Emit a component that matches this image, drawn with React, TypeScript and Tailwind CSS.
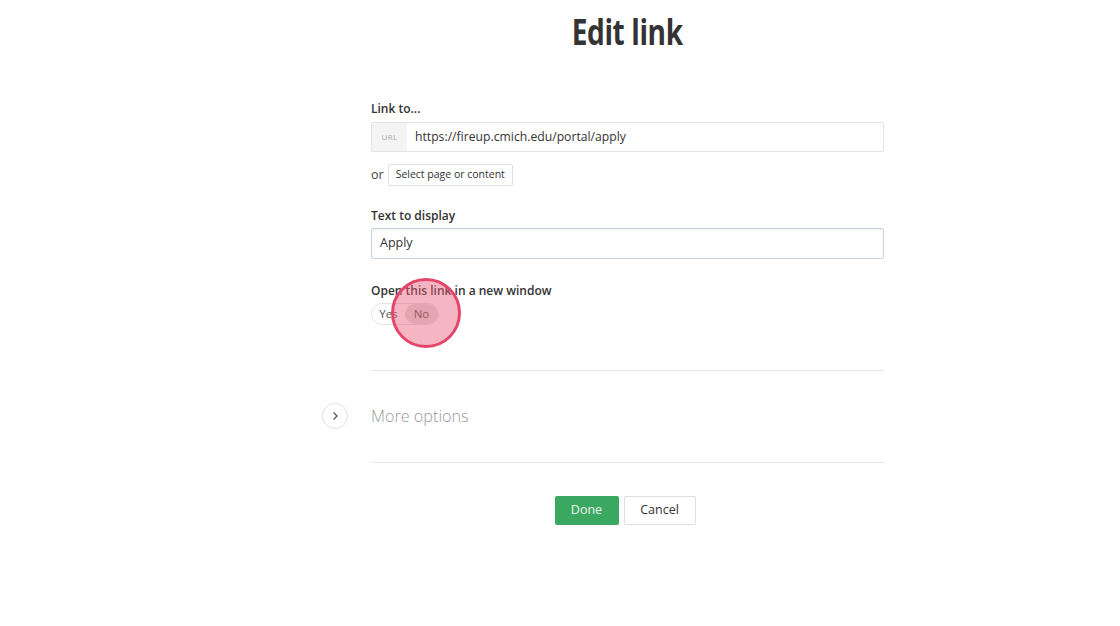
import React from "react";

export default function App() {
  return (
    <div className="w-[1120px] h-[626px] bg-white overflow-hidden relative" style={{ fontFamily: '"Open Sans", "Liberation Sans", sans-serif' }}>
      <div className="pl-[371px] w-[884px] box-content">
        <div className="w-[513px]">
          <h1 className="text-center text-[36px] leading-[44px] font-bold text-[#333] pt-[10px] tracking-[-0.5px]">
            <span className="inline-block scale-x-[0.78]">Edit link</span>
          </h1>

          <div className="mt-[46px]">
            <div className="text-[12px] leading-[18px] font-semibold text-[#333]">Link to...</div>
            <div className="mt-[4px] flex h-[30px] border border-[#e3e3e3] rounded-[2px]">
              <div className="w-[35px] bg-[#f4f4f4] flex items-center justify-center text-[8px] text-[#aaa] tracking-[0.3px]">URL</div>
              <div className="flex items-center pl-[8px] text-[12.2px] text-[#333]">https://fireup.cmich.edu/portal/apply</div>
            </div>
            <div className="mt-[12px] flex items-center gap-[4px]">
              <span className="text-[12.5px] text-[#444]">or</span>
              <button className="h-[22px] px-[7px] border border-[#e0e0e0] rounded-[2px] text-[10.5px] text-[#333] bg-white">Select page or content</button>
            </div>
          </div>

          <div className="mt-[21px]">
            <div className="text-[12px] leading-[18px] font-semibold text-[#333]">Text to display</div>
            <div className="mt-[3px] h-[31px] border border-[#c9d4e0] rounded-[2px] flex items-center pl-[8px] text-[12.5px] text-[#333] shadow-[inset_0_1px_2px_rgba(0,0,0,0.06)]">Apply</div>
          </div>

          <div className="mt-[23px]">
            <div className="text-[12px] leading-[18px] font-semibold text-[#333]">Open this link in a new window</div>
            <div className="mt-[3px] inline-flex h-[22px] border border-[#e3e3e3] rounded-full overflow-hidden text-[11.5px] text-[#555]">
              <div className="w-[33px] flex items-center justify-center">Yes</div>
              <div className="w-[33px] flex items-center justify-center bg-[#e0e0e0] rounded-full">No</div>
            </div>
          </div>

          <div className="mt-[45px] border-t border-[#e6e6e6]"></div>
          <div className="relative h-[91px] flex items-center">
            <div className="absolute left-[-49px] top-[32px] w-[26px] h-[26px] rounded-full border border-[#e0e0e0] flex items-center justify-center">
              <svg width="10" height="10" viewBox="0 0 10 10" fill="none">
                <path d="M3.5 1.5 L7 5 L3.5 8.5" stroke="#555" strokeWidth="1.3" />
              </svg>
            </div>
            <span className="text-[16.2px] font-light text-[#9a9a9a]">More options</span>
          </div>
          <div className="border-t border-[#e6e6e6]"></div>

          <div className="mt-[33px] flex justify-center gap-[5px] pr-[5px]">
            <button className="w-[64px] h-[29px] bg-[#3aa860] rounded-[2px] text-[12.5px] text-white/90">Done</button>
            <button className="w-[72px] h-[29px] bg-white border border-[#e0e0e0] rounded-[2px] text-[12.5px] text-[#333]">Cancel</button>
          </div>
        </div>
      </div>

      <div className="absolute left-[391px] top-[278px] w-[70px] h-[70px] rounded-full border-[3px] border-[#e2466a] bg-[rgba(234,90,120,0.45)]"></div>
    </div>
  );
}
